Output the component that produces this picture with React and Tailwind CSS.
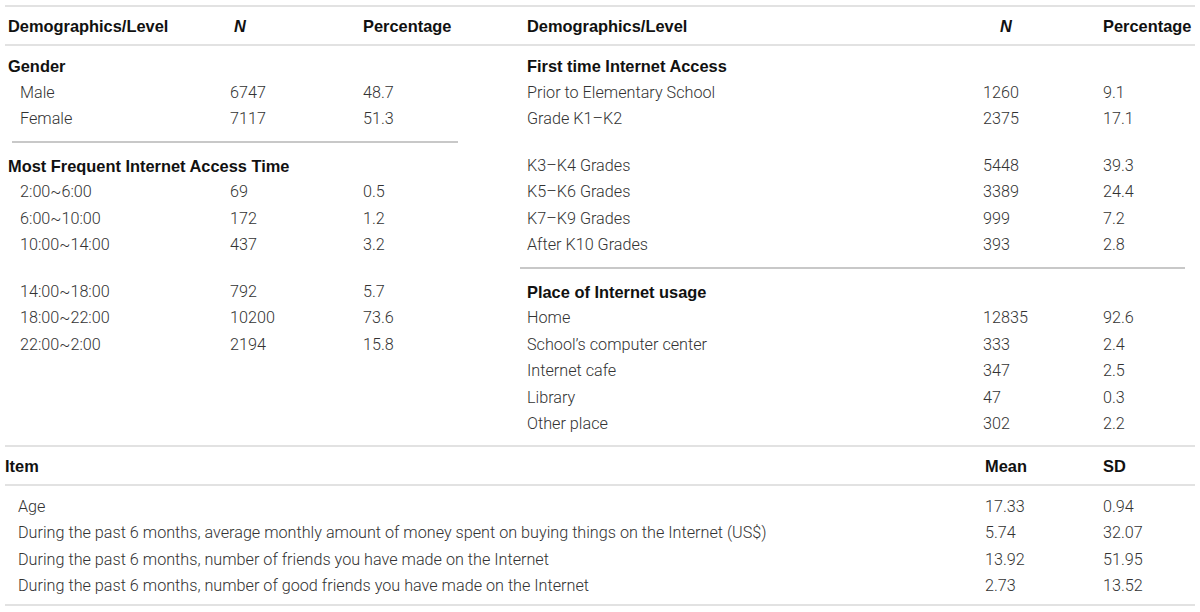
import React from 'react';

const body = { fontFamily: 'Roboto, "Liberation Sans", sans-serif' };
const bold = { fontFamily: '"Liberation Sans", Arial, sans-serif' };

const leftRows = [
  { head: 'Gender' },
  { label: 'Male', n: '6747', p: '48.7' },
  { label: 'Female', n: '7117', p: '51.3' },
  { rule: true },
  { head: 'Most Frequent Internet Access Time' },
  { label: '2:00~6:00', n: '69', p: '0.5' },
  { label: '6:00~10:00', n: '172', p: '1.2' },
  { label: '10:00~14:00', n: '437', p: '3.2' },
  { gap: true },
  { label: '14:00~18:00', n: '792', p: '5.7' },
  { label: '18:00~22:00', n: '10200', p: '73.6' },
  { label: '22:00~2:00', n: '2194', p: '15.8' },
];

const rightRows = [
  { head: 'First time Internet Access' },
  { label: 'Prior to Elementary School', n: '1260', p: '9.1' },
  { label: 'Grade K1–K2', n: '2375', p: '17.1' },
  { gap: true },
  { label: 'K3–K4 Grades', n: '5448', p: '39.3' },
  { label: 'K5–K6 Grades', n: '3389', p: '24.4' },
  { label: 'K7–K9 Grades', n: '999', p: '7.2' },
  { label: 'After K10 Grades', n: '393', p: '2.8' },
  { rule: true },
  { head: 'Place of Internet usage' },
  { label: 'Home', n: '12835', p: '92.6' },
  { label: 'School’s computer center', n: '333', p: '2.4' },
  { label: 'Internet cafe', n: '347', p: '2.5' },
  { label: 'Library', n: '47', p: '0.3' },
  { label: 'Other place', n: '302', p: '2.2' },
];

const items = [
  ['Age', '17.33', '0.94'],
  ['During the past 6 months, average monthly amount of money spent on buying things on the Internet (US$)', '5.74', '32.07'],
  ['During the past 6 months, number of friends you have made on the Internet', '13.92', '51.95'],
  ['During the past 6 months, number of good friends you have made on the Internet', '2.73', '13.52'],
];

// one block of rows; indent = left padding of the sub rows
const Block = ({ rows, labelW, nW, indent, ruleClass }) => (
  <div className="flex flex-col">
    {rows.map((r, i) => {
      if (r.rule) {
        return (
          <div key={i} className="h-[20px] flex items-center">
            <div className={`h-[2px] bg-[#c8c8c8] ${ruleClass}`} />
          </div>
        );
      }
      if (r.gap) return <div key={i} className="h-[20px]" />;
      if (r.head) {
        return (
          <div key={i} className="h-[26.5px] leading-[26.5px] pt-[1px] font-bold text-[16.4px] text-[#111]" style={bold}>
            {r.head}
          </div>
        );
      }
      return (
        <div key={i} className="flex h-[26.5px] leading-[26.5px] pt-[1px] font-light text-[16.2px] text-[#333]">
          <div className={`${labelW} ${indent}`}>{r.label}</div>
          <div className={nW}>{r.n}</div>
          <div className="flex-1">{r.p}</div>
        </div>
      );
    })}
  </div>
);

export default function App() {
  return (
    <div className="w-[1200px] h-[612px] bg-white pt-[5px] px-[5px]" style={body}>
      <div className="border-t-2 border-[#e2e2e2]">
        {/* header row */}
        <div className="flex h-[39px] items-center pt-[2px] font-bold text-[16.4px] text-[#111] border-b-2 border-[#e2e2e2]" style={bold}>
          <div className="w-[229px] pl-[3px]">Demographics/Level</div>
          <div className="w-[129px] italic">N</div>
          <div className="w-[157px]">Percentage</div>
          <div className="w-[480px] pl-[7px]">Demographics/Level</div>
          <div className="w-[103px] italic">N</div>
          <div className="flex-1">Percentage</div>
        </div>

        {/* two side by side blocks */}
        <div className="flex pt-[6px] pb-[8px] border-b-2 border-[#e2e2e2]">
          <div className="w-[515px] pl-[3px]">
            <Block rows={leftRows} labelW="w-[222px]" nW="w-[133px]" indent="pl-[12px]" ruleClass="ml-[4px] w-[446px]" />
          </div>
          <div className="flex-1 pl-[7px]">
            <Block rows={rightRows} labelW="w-[456px]" nW="w-[120px]" indent="" ruleClass="-ml-[7px] w-[665px]" />
          </div>
        </div>

        {/* bottom table */}
        <div className="flex h-[39px] items-center pt-[2px] font-bold text-[16.4px] text-[#111] border-b-2 border-[#e2e2e2]" style={bold}>
          <div className="w-[980px]">Item</div>
          <div className="w-[118px]">Mean</div>
          <div className="flex-1">SD</div>
        </div>
        <div className="flex flex-col pt-[7px] pb-[5px] border-b-2 border-[#e2e2e2]">
          {items.map((it) => (
            <div key={it[0]} className="flex h-[26.5px] leading-[26.5px] pt-[1px] font-light text-[16.2px] text-[#333]">
              <div className="w-[980px] pl-[13px]">{it[0]}</div>
              <div className="w-[118px]">{it[1]}</div>
              <div className="flex-1">{it[2]}</div>
            </div>
          ))}
        </div>
      </div>
    </div>
  );
}
